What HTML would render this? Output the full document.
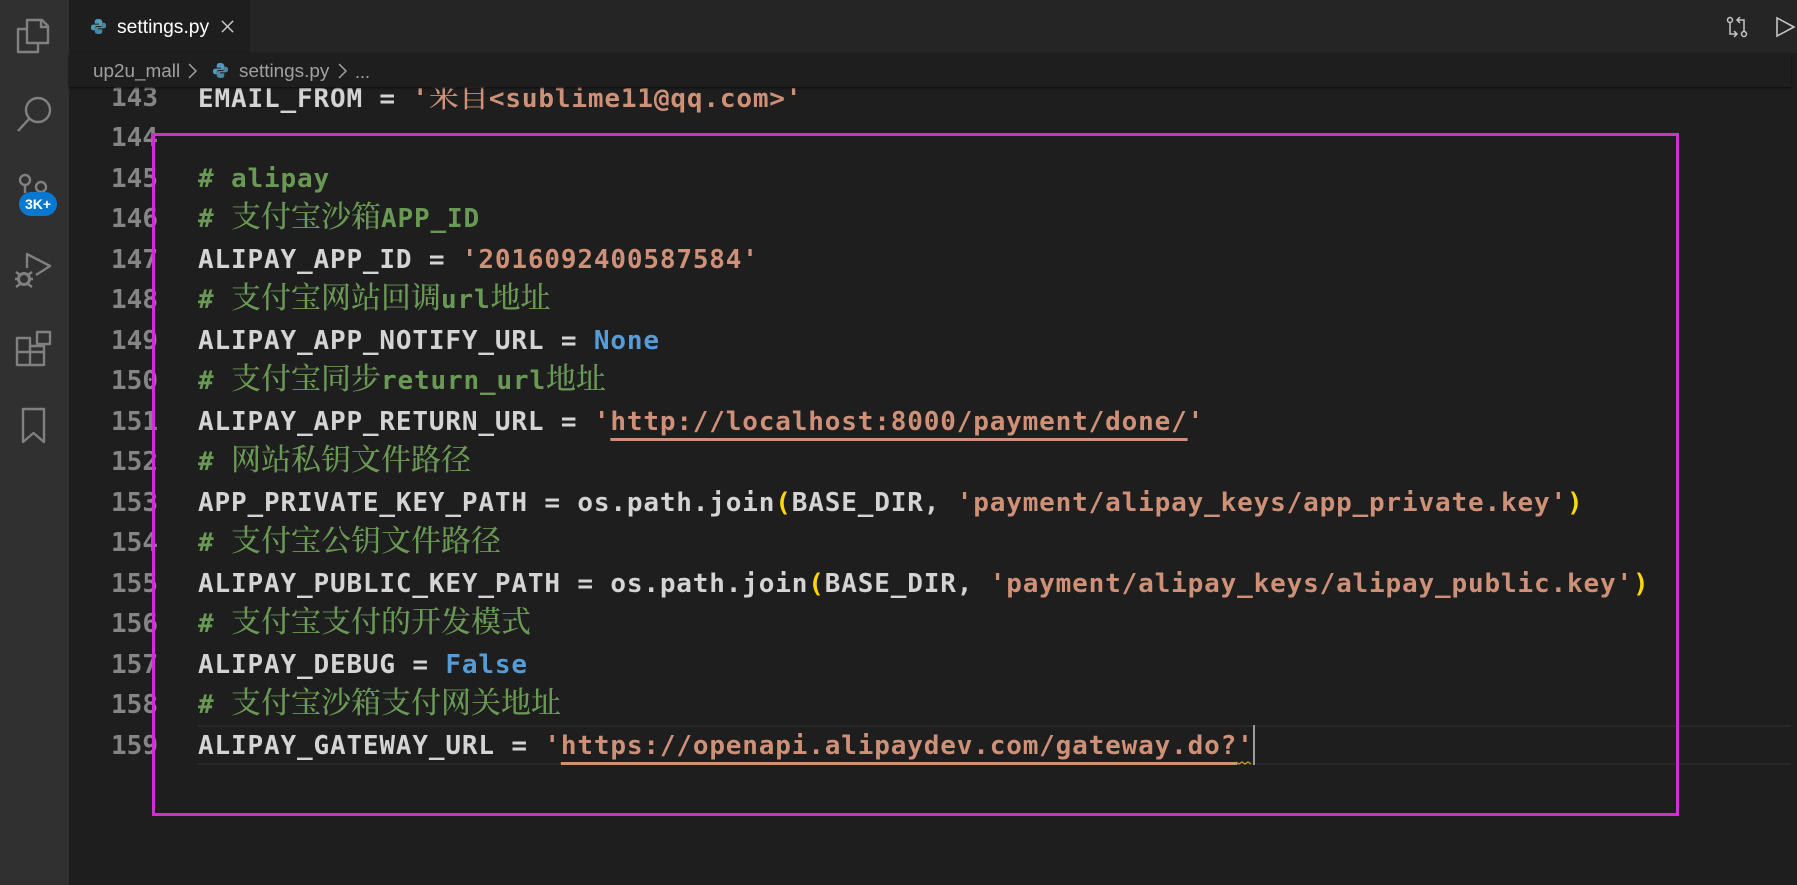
<!DOCTYPE html>
<html><head><meta charset="utf-8">
<style>
html,body{margin:0;padding:0;background:#1e1e1e;width:1797px;height:885px;overflow:hidden}
#act{position:absolute;left:0;top:0;width:69px;height:885px;background:#303030}
#tabs{position:absolute;left:69px;top:0;right:0;height:53px;background:#252526}
#tab{position:absolute;left:69px;top:0;width:181px;height:53px;background:#1e1e1e}
#crumb{position:absolute;left:69px;top:53px;right:6px;height:34px;background:#1e1e1e;box-shadow:0 1px 2px #0e0e0e;z-index:3}
.ui{position:absolute;font-family:"Liberation Sans",sans-serif;white-space:nowrap;z-index:4}
.l{position:absolute;left:198px;height:40px;overflow:visible;font:bold 26px/40px "DejaVu Sans Mono",monospace;letter-spacing:.84px;color:#d4d4d4;white-space:pre}
.n{position:absolute;left:100px;width:58px;text-align:right;height:40px;font:bold 26px/40px "DejaVu Sans Mono",monospace;color:#858585;white-space:pre}
.g{color:#6a9955}.s{color:#ce9178}.k{color:#569cd6}.y{color:#ffd700}
.z{font:500 30px/0 "Noto Serif CJK SC","Noto Sans CJK SC",serif;letter-spacing:0}
.u{text-decoration:underline;text-decoration-thickness:3px;text-underline-offset:8px;text-decoration-skip-ink:none}
#cur{position:absolute;left:198px;top:725px;right:6px;height:40px;border-top:2px solid #282828;border-bottom:2px solid #282828;box-sizing:border-box}
#caret{position:absolute;left:1253px;top:725px;width:2px;height:40px;background:#9a9a9a}
#box{position:absolute;left:152px;top:133px;width:1527px;height:683px;border:3px solid #d22fd2;box-sizing:border-box;z-index:2}
svg{position:absolute;z-index:4}
</style></head><body>
<div id="act"></div><div id="tabs"></div><div id="tab"></div><div id="crumb"></div>

<svg style="left:0;top:0" width="69" height="470" viewBox="0 0 69 470" fill="none" stroke="#808080" stroke-width="2.400" stroke-linejoin="round">
<path d="M27 20h15l6 6v17H27zM41 20v7h7"/>
<path d="M27 29H18v23h20v-9"/>
<circle cx="38" cy="110" r="12"/><path d="M29 119 L18 131"/>
<circle cx="25" cy="180" r="5"/><circle cx="41" cy="187" r="5"/><path d="M25 185v8"/>
<path d="M27 268V254L50 266 36 275" />
<circle cx="24" cy="279" r="5.500" stroke-width="3"/><path d="M16 272l4 3M32 272l-4 3M15 279h3M30 279h3M16 287l4-3M32 287l-4-3" stroke-width="2.400"/>
<path d="M17 338h13v27H17zM17 352h27v13H30M44 352v-6h-14"/><path d="M37 332h13v12H37z"/>
<path d="M23 409h21v33l-10.500-9-10.500 9z"/>
</svg>
<div class="ui" style="left:19px;top:192px;width:38px;height:24px;border-radius:12px;background:#0b78d0;color:#fff;font-size:14px;font-weight:bold;line-height:24px;text-align:center">3K+</div>

<svg style="left:90px;top:18px" width="17" height="17" viewBox="0 0 18 18"><path d="M9 1C6 1 5 2 5 4v2h4.500v1H3.500C1.500 7 1 8.500 1 10s.8 3 2.500 3H5v-2c0-1.500 1-2.500 3-2.500h3c1.500 0 2-1 2-2V4c0-2-2-3-4-3z" fill="#519aba"/><path d="M9 17c3 0 4-1 4-3v-2H8.500v-1h6c2 0 2.500-1.500 2.500-3s-.8-3-2.500-3H13v2c0 1.500-1 2.500-3 2.500H7c-1.500 0-2 1-2 2V14c0 2 2 3 4 3z" fill="#519aba" opacity=".85"/></svg>
<div class="ui" style="left:117px;top:16px;font-size:19.300px;line-height:24px;color:#fff">settings.py</div>
<svg style="left:220px;top:19px" width="15" height="15" viewBox="0 0 16 16" stroke="#d0d0d0" stroke-width="1.500"><path d="M2 2l12 12M14 2L2 14"/></svg>

<div class="ui" style="left:93px;top:60px;font-size:18.900px;line-height:24px;color:#a0a0a0">up2u_mall</div>
<svg style="left:186px;top:62px" width="13" height="18" viewBox="0 0 13 18" fill="none" stroke="#a0a0a0" stroke-width="1.500"><path d="M3 2l7 7-7 7"/></svg>
<svg style="left:212px;top:62px" width="17" height="17" viewBox="0 0 18 18"><path d="M9 1C6 1 5 2 5 4v2h4.500v1H3.500C1.500 7 1 8.500 1 10s.8 3 2.500 3H5v-2c0-1.500 1-2.500 3-2.500h3c1.500 0 2-1 2-2V4c0-2-2-3-4-3z" fill="#519aba"/><path d="M9 17c3 0 4-1 4-3v-2H8.500v-1h6c2 0 2.500-1.500 2.500-3s-.8-3-2.500-3H13v2c0 1.500-1 2.500-3 2.500H7c-1.500 0-2 1-2 2V14c0 2 2 3 4 3z" fill="#519aba" opacity=".85"/></svg>
<div class="ui" style="left:239px;top:60px;font-size:18.900px;line-height:24px;color:#a0a0a0">settings.py</div>
<svg style="left:336px;top:62px" width="13" height="18" viewBox="0 0 13 18" fill="none" stroke="#a0a0a0" stroke-width="1.500"><path d="M3 2l7 7-7 7"/></svg>
<div class="ui" style="left:355px;top:60px;font-size:18px;line-height:24px;color:#a0a0a0">...</div>

<svg style="left:1725px;top:15px" width="24" height="24" viewBox="0 0 24 24" fill="none" stroke="#c5c5c5" stroke-width="1.500"><circle cx="5" cy="5" r="2.500"/><circle cx="19" cy="19" r="2.500"/><path d="M5 8v11h7M9 16l3 3-3 3M19 16V5h-7M15 2l-3 3 3 3"/></svg>
<svg style="left:1774px;top:15px" width="23" height="24" viewBox="0 0 23 24" fill="none" stroke="#c5c5c5" stroke-width="1.600"><path d="M3 3v18L20 12z"/></svg>

<div id="cur"></div>

<div class="n" style="top:78px">143</div><div class="l" style="top:79px">EMAIL_FROM = <span class="s">'<span class="z">来自</span>&lt;sublime11@qq.com&gt;'</span></div>
<div class="n" style="top:118px">144</div>
<div class="n" style="top:159px">145</div><div class="l g" style="top:159px"># alipay</div>
<div class="n" style="top:199px">146</div><div class="l g" style="top:199px"># <span class="z">支付宝沙箱</span>APP_ID</div>
<div class="n" style="top:240px">147</div><div class="l" style="top:240px">ALIPAY_APP_ID = <span class="s">'2016092400587584'</span></div>
<div class="n" style="top:280px">148</div><div class="l g" style="top:280px"># <span class="z">支付宝网站回调</span>url<span class="z">地址</span></div>
<div class="n" style="top:321px">149</div><div class="l" style="top:321px">ALIPAY_APP_NOTIFY_URL = <span class="k">None</span></div>
<div class="n" style="top:361px">150</div><div class="l g" style="top:361px"># <span class="z">支付宝同步</span>return_url<span class="z">地址</span></div>
<div class="n" style="top:402px">151</div><div class="l" style="top:402px">ALIPAY_APP_RETURN_URL = <span class="s">'<span class="u">http://localhost:8000/payment/done/</span>'</span></div>
<div class="n" style="top:442px">152</div><div class="l g" style="top:442px"># <span class="z">网站私钥文件路径</span></div>
<div class="n" style="top:483px">153</div><div class="l" style="top:483px">APP_PRIVATE_KEY_PATH = os.path.join<span class="y">(</span>BASE_DIR, <span class="s">'payment/alipay_keys/app_private.key'</span><span class="y">)</span></div>
<div class="n" style="top:523px">154</div><div class="l g" style="top:523px"># <span class="z">支付宝公钥文件路径</span></div>
<div class="n" style="top:564px">155</div><div class="l" style="top:564px">ALIPAY_PUBLIC_KEY_PATH = os.path.join<span class="y">(</span>BASE_DIR, <span class="s">'payment/alipay_keys/alipay_public.key'</span><span class="y">)</span></div>
<div class="n" style="top:604px">156</div><div class="l g" style="top:604px"># <span class="z">支付宝支付的开发模式</span></div>
<div class="n" style="top:645px">157</div><div class="l" style="top:645px">ALIPAY_DEBUG = <span class="k">False</span></div>
<div class="n" style="top:685px">158</div><div class="l g" style="top:685px"># <span class="z">支付宝沙箱支付网关地址</span></div>
<div class="n" style="top:726px">159</div><div class="l" style="top:726px">ALIPAY_GATEWAY_URL = <span class="s">'<span class="u">https://openapi.alipaydev.com/gateway.do?</span>'</span></div>

<div id="caret"></div>
<svg style="left:1236px;top:760px" width="16" height="6" viewBox="0 0 16 6" fill="none" stroke="#c9a21f" stroke-width="1.300"><path d="M0 2l3 2 3-2 3 2 3-2 3 2"/></svg>
<div id="box"></div>
</body></html>
